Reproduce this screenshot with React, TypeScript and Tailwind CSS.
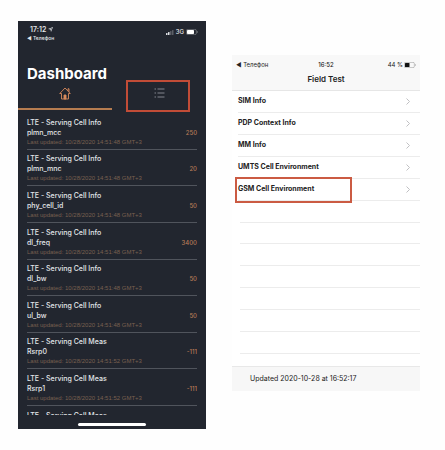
import { useState } from "react";

const cells = [
    { id: 1, group: "LTE - Serving Cell Info", name: "plmn_mcc", value: "250", time: "14:51:48" },
    { id: 2, group: "LTE - Serving Cell Info", name: "plmn_mnc", value: "20", time: "14:51:48" },
    { id: 3, group: "LTE - Serving Cell Info", name: "phy_cell_id", value: "50", time: "14:51:48" },
    { id: 4, group: "LTE - Serving Cell Info", name: "dl_freq", value: "3400", time: "14:51:48" },
    { id: 5, group: "LTE - Serving Cell Info", name: "dl_bw", value: "50", time: "14:51:48" },
    { id: 6, group: "LTE - Serving Cell Info", name: "ul_bw", value: "50", time: "14:51:48" },
    { id: 7, group: "LTE - Serving Cell Meas", name: "Rsrp0", value: "-111", time: "14:51:52" },
    { id: 8, group: "LTE - Serving Cell Meas", name: "Rsrp1", value: "-111", time: "14:51:52" },
];

const menu = ["SIM Info", "PDP Context Info", "MM Info", "UMTS Cell Environment", "GSM Cell Environment"];

const emptyRows = [1, 2, 3, 4, 5, 6, 7];

function Dashboard() {
    const [tab, setTab] = useState("home");

    return (
        <section className="flex aspect-[188/408] min-w-0 flex-1 flex-col bg-[#22262f] text-[#e4e6ea]">
            <div className="flex items-start justify-between pl-[9px] pr-2 pt-1">
                <div className="flex flex-col">
                    <div className="flex items-center gap-0.5 pl-[3px] text-[7px] font-semibold leading-[9px]">
                        17:12
                        <svg className="size-[5px]" viewBox="0 0 10 10" fill="currentColor">
                            <path fillRule="evenodd" d="M10 0 6 10 5 5 0 4Zm-2.2 2.1L4 3.8l2 .3.4 2Z" />
                        </svg>
                    </div>
                    <a href="#phone" className="text-[5px] font-medium leading-[8px]">◀ Телефон</a>
                </div>
                <div className="flex items-center gap-[2px] pt-[3px] text-[6px] font-medium leading-[8px]">
                    <svg className="h-[5px] w-[8px]" viewBox="0 0 16 10" fill="currentColor">
                        <rect x="0" y="6" width="3" height="4" rx="1" />
                        <rect x="4" y="4" width="3" height="6" rx="1" />
                        <rect x="8" y="2" width="3" height="8" rx="1" opacity=".3" />
                        <rect x="12" y="0" width="3" height="10" rx="1" opacity=".3" />
                    </svg>
                    3G
                    <svg className="h-[6px] w-[12px]" viewBox="0 0 24 12">
                        <rect x=".7" y=".7" width="20" height="10.6" rx="3" fill="none" stroke="#8b8e94" strokeWidth="1.2" />
                        <rect x="2" y="2" width="14" height="8" rx="1.5" fill="#fff" />
                        <path d="M22 4c2 .5 2 3.5 0 4Z" fill="#8b8e94" />
                    </svg>
                </div>
            </div>

            <h1 className="mt-[22px] pl-[9px] text-[15px] font-bold leading-5 text-white">Dashboard</h1>

            <div className="flex" role="tablist">
                <button
                    role="tab"
                    aria-label="Home"
                    aria-selected={tab === "home"}
                    onClick={() => setTab("home")}
                    className="flex h-[26px] flex-1 flex-col items-center justify-between pt-[3px]"
                >
                    <svg className="h-[13px] w-[12px]" viewBox="0 0 24 26" fill="none" stroke="#d98a5c" strokeWidth="1.8" strokeLinejoin="round">
                        <path d="M1.5 13 12 2l10.5 11H19v11H5V13Z" />
                        <path d="M18 8V3.5h2V10" />
                        <path d="M10 24v-8h4v8Z" fill="#d98a5c" />
                    </svg>
                    {tab === "home" && <span className="h-[2px] w-full bg-[#b67c50]" />}
                </button>
                <button
                    role="tab"
                    aria-label="List"
                    aria-selected={tab === "list"}
                    onClick={() => setTab("list")}
                    className="relative flex h-[26px] flex-1 flex-col items-center justify-between pt-1"
                >
                    <svg className="h-[10px] w-[11px]" viewBox="0 0 22 20" stroke="#a3a6ad" strokeWidth="1.5">
                        <path d="M1 2h3M1 10h3M1 18h3M7 2h14M7 10h14M7 18h14" />
                    </svg>
                    {tab === "list" && <span className="h-[2px] w-full bg-[#b67c50]" />}
                    <span className="pointer-events-none absolute -bottom-0.5 -top-1 left-[14px] right-4 border-2 border-[#c24c37]" />
                </button>
            </div>

            <ul className="mt-[3px] flex flex-1 flex-col">
                {cells.map((cell) => (
                    <li key={cell.id} className="mx-[9px] flex flex-1 flex-col justify-end border-b border-[#50545c] pb-0.5">
                        <p className="text-[7px] font-medium leading-[11px]">{cell.group}</p>
                        <div className="flex justify-between text-[7px] font-medium leading-[10px]">
                            <span>{cell.name}</span>
                            <span className="text-[6px] text-[#b97b57]">{cell.value}</span>
                        </div>
                        <p className="whitespace-nowrap font-['Liberation_Sans',sans-serif] text-[6px] leading-[9px] text-[#79604f]">
                            Last updated: 10/28/2020 {cell.time} GMT+3
                        </p>
                    </li>
                ))}
            </ul>
            <div className="mx-[9px] h-[9px] overflow-hidden pt-1">
                <p className="text-[7px] font-medium leading-[11px]">LTE - Serving Cell Meas</p>
            </div>
            <div className="flex h-[14px] items-end justify-center pb-[3px]">
                <div className="h-[3px] w-[36%] rounded-full bg-white" />
            </div>
        </section>
    );
}

function FieldTest() {
    return (
        <section className="mt-[34px] flex aspect-[188/336] min-w-0 flex-1 flex-col bg-white text-[#222]">
            <header className="h-9 border-b border-[#e6e6e6] bg-[#f8f8f8] pt-[5px]">
                <div className="grid grid-cols-3 items-center pl-1 pr-1 text-[6px] leading-[9px]">
                    <a href="#phone">◀ Телефон</a>
                    <span className="text-center font-medium">16:52</span>
                    <span className="flex items-center justify-end gap-px">
                        44 %
                        <svg className="h-[6px] w-[12px]" viewBox="0 0 24 12">
                            <rect x=".7" y=".7" width="20" height="10.6" rx="2.5" fill="none" stroke="#999" strokeWidth="1.2" />
                            <rect x="2" y="2" width="9" height="8" rx="1" fill="#111" />
                            <path d="M22 4c2 .5 2 3.5 0 4Z" fill="#999" />
                        </svg>
                    </span>
                </div>
                <h2 className="pt-1 text-center text-[8px] font-semibold leading-[12px]">Field Test</h2>
            </header>

            <ul className="flex flex-1 flex-col">
                {menu.map((label) => (
                    <li key={label} className="relative flex flex-1 pl-[6px]">
                        <button className="flex flex-1 items-center justify-between border-b border-[#ececec] pr-[10px] text-left text-[7px] font-bold leading-[10px]">
                            {label}
                            <svg className="h-[7px] w-[4px]" viewBox="0 0 8 14" fill="none" stroke="#b9b9bc" strokeWidth="1.8">
                                <path d="m1 1 6 6-6 6" />
                            </svg>
                        </button>
                        {label === "GSM Cell Environment" && (
                            <span className="pointer-events-none absolute -bottom-0.5 -top-0.5 left-[3px] w-[62%] border-2 border-[#cb5b43]" />
                        )}
                    </li>
                ))}
                {emptyRows.map((row) => (
                    <li key={row} className="flex flex-1 pl-2">
                        <div className="flex-1 border-b border-[#ececec]" />
                    </li>
                ))}
            </ul>

            <footer className="mt-3 flex h-[25px] items-center border-t border-[#e8e8e8] bg-[#f7f7f7] pl-[18px] text-[7px] leading-[10px]">
                Updated 2020-10-28 at 16:52:17
            </footer>
        </section>
    );
}

export default function App() {
    return (
        <main className="flex min-h-screen items-start gap-[26px] bg-[#fefefe] pb-5 pl-[18px] pr-[25px] pt-[21px] font-['Inter','Liberation_Sans',sans-serif]">
            <Dashboard />
            <FieldTest />
        </main>
    );
}
